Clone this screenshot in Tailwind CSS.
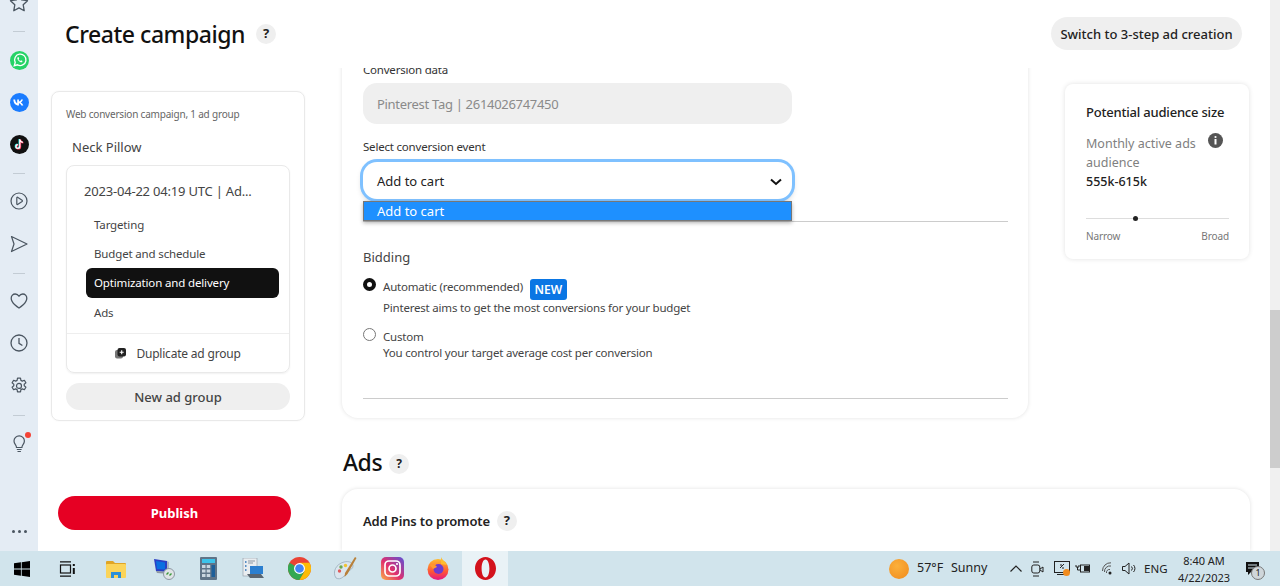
<!doctype html>
<html>
<head>
<meta charset="utf-8">
<title>Create campaign</title>
<script src="https://cdn.jsdelivr.net/npm/@tailwindcss/browser@4"></script>
</head>
<body class="font-['Noto_Sans',sans-serif] text-[#333] bg-white overflow-hidden">
<div class="w-[1280px] h-[586px] flex flex-col overflow-hidden">
  <div class="flex h-[551px]">
    <!-- browser sidebar -->
    <aside class="w-[38px] shrink-0 bg-[#e4ecf4] flex flex-col items-center overflow-hidden text-[#4a5560]">
      <svg class="w-[20px] h-[20px] mt-[-7px] shrink-0" viewBox="0 0 20 20" fill="none" stroke="currentColor" stroke-width="1.3"><path d="M10 1.5l2.6 5.4 5.9.8-4.3 4.1 1 5.9-5.2-2.8-5.2 2.8 1-5.9L1.500 7.700l5.900-.8z" stroke-linejoin="round"/></svg>
      <div class="w-[12px] h-px bg-[#c3ccd4] mt-[18px]"></div>
      <svg class="w-[19px] h-[19px] mt-[19px] shrink-0" viewBox="0 0 20 20"><circle cx="10" cy="10" r="10" fill="#25d366"/><path d="M4.500 15.500l1-3.500a6 6 0 1 1 2.400 2.500z" fill="none" stroke="#fff" stroke-width="1.400"/><path d="M7.800 6.800c-.8 1.800 2.800 6 5 5l.3-1.300-1.500-.8-.7.800c-.8-.3-1.500-1-1.900-1.900l.7-.7-.7-1.500z" fill="#fff"/></svg>
      <svg class="w-[19px] h-[19px] mt-[23px] shrink-0" viewBox="0 0 20 20"><circle cx="10" cy="10" r="10" fill="#1a7cff"/><path d="M3.500 6.800h1.900c.2 2.400 1.200 3.600 2.200 3.900V6.800h1.800v2.200c1-.1 2-1.100 2.400-2.200h1.800c-.3 1.500-1.400 2.600-2.200 3.100.8.400 2.100 1.400 2.600 3.200h-2c-.4-1.200-1.400-2.100-2.600-2.300v2.300h-.2c-3.500 0-5.500-2.400-5.700-6.300z" fill="#fff"/></svg>
      <svg class="w-[19px] h-[19px] mt-[23px] shrink-0" viewBox="0 0 20 20"><circle cx="10" cy="10" r="10" fill="#111"/><path d="M10.300 4.500v7.600a2 2 0 1 1-2-2M10.300 4.500c.2 1.900 1.400 3 3.200 3.200" fill="none" stroke="#25f4ee" stroke-width="1.700" transform="translate(-.5 -.3)"/><path d="M10.300 4.500v7.600a2 2 0 1 1-2-2M10.300 4.500c.2 1.900 1.400 3 3.200 3.200" fill="none" stroke="#fe2c55" stroke-width="1.700" transform="translate(.6 .4)"/><path d="M10.300 4.500v7.600a2 2 0 1 1-2-2M10.300 4.500c.2 1.900 1.400 3 3.200 3.200" fill="none" stroke="#fff" stroke-width="1.300"/></svg>
      <div class="w-[12px] h-px bg-[#c3ccd4] mt-[19px]"></div>
      <svg class="w-[18px] h-[18px] mt-[18px] shrink-0" viewBox="0 0 18 18" fill="none" stroke="currentColor" stroke-width="1.200"><circle cx="9" cy="9" r="8"/><path d="M6.800 5.800c0-.5.400-.7.800-.5l4.500 3c.4.300.4.900 0 1.200l-4.500 3c-.4.200-.8 0-.8-.5z" stroke-linejoin="round"/></svg>
      <svg class="w-[18px] h-[18px] mt-[25px] shrink-0" viewBox="0 0 18 18" fill="none" stroke="currentColor" stroke-width="1.200"><path d="M1.500 1.500L17 9 1.500 16.500 4 9z" stroke-linejoin="round"/></svg>
      <div class="w-[12px] h-px bg-[#c3ccd4] mt-[20px]"></div>
      <svg class="w-[18px] h-[18px] mt-[18px] shrink-0" viewBox="0 0 18 18" fill="none" stroke="currentColor" stroke-width="1.300"><path d="M9 16S1.200 11.400 1.200 6.200C1.200 3.600 3.100 2 5.200 2 6.800 2 8.200 2.900 9 4.300 9.800 2.900 11.200 2 12.800 2c2.100 0 4 1.600 4 4.200C16.800 11.400 9 16 9 16z" stroke-linejoin="round"/></svg>
      <svg class="w-[18px] h-[18px] mt-[24px] shrink-0" viewBox="0 0 18 18" fill="none" stroke="currentColor" stroke-width="1.300"><circle cx="9" cy="9" r="8"/><path d="M9 4v5.300l3.400 2.200"/></svg>
      <svg class="w-[18px] h-[18px] mt-[25px] shrink-0" viewBox="0 0 18 18" fill="none" stroke="currentColor" stroke-width="1.200"><path d="M7.500 1.200h3l.4 2.200 1.400.7 2.100-.8 1.500 2.600-1.700 1.400v1.400l1.700 1.400-1.500 2.600-2.100-.8-1.400.7-.4 2.200h-3l-.4-2.200-1.400-.7-2.100.8-1.500-2.600 1.700-1.400V7.300L2.100 5.900l1.500-2.600 2.100.8 1.400-.7z" stroke-linejoin="round"/><circle cx="9" cy="8.900" r="2.500"/></svg>
      <div class="w-[12px] h-px bg-[#c3ccd4] mt-[20px]"></div>
      <div class="relative mt-[18px] w-[18px] h-[20px] shrink-0">
        <svg class="w-[18px] h-[20px]" viewBox="0 0 18 20" fill="none" stroke="currentColor" stroke-width="1.200"><path d="M6.500 13.500c0-2.500-2.500-3.300-2.500-6.500a5.200 5.200 0 0 1 10.400 0c0 3.200-2.500 4-2.500 6.500zM6.800 15.500h4.800M7.500 17.500h3.400"/></svg>
        <span class="absolute top-[-2px] right-[-3px] w-[6px] h-[6px] rounded-full bg-[#f44336]"></span>
      </div>
      <div class="flex gap-[3px] mt-auto mb-[18px]">
        <span class="w-[3px] h-[3px] rounded-full bg-[#4a5560]"></span>
        <span class="w-[3px] h-[3px] rounded-full bg-[#4a5560]"></span>
        <span class="w-[3px] h-[3px] rounded-full bg-[#4a5560]"></span>
      </div>
    </aside>

    <!-- page -->
    <main class="w-[1232px] shrink-0 flex flex-col">
      <header class="h-[68px] shrink-0 flex items-start relative z-10 bg-white">
        <h1 class="ml-[27px] mt-[17px] text-[23px] tracking-[-0.45px] leading-[34px] font-medium text-[#111]">Create campaign</h1>
        <span class="ml-[11px] mt-[24px] w-[20px] h-[20px] rounded-full bg-[#efefef] flex items-center justify-center text-[13px] font-bold text-[#222]">?</span>
        <button class="ml-auto mr-[28px] mt-[17px] pt-[2px] h-[33px] w-[191px] rounded-full bg-[#efefef] text-[13px] font-medium text-[#222] whitespace-nowrap">Switch to 3-step ad creation</button>
      </header>

      <div class="flex flex-1 min-h-0 overflow-hidden">
        <!-- left column -->
        <div class="w-[254px] ml-[13px] shrink-0 flex flex-col">
          <div class="mt-[23px] h-[330px] border border-[#e9e9e9] rounded-lg px-[14px] shadow-[0_0_2px_rgba(0,0,0,0.05)]">
            <p class="mt-[15px] text-[10px] tracking-[-0.2px] leading-[14px] text-[#666] whitespace-nowrap">Web conversion campaign, 1 ad group</p>
            <p class="mt-[17px] ml-[6px] text-[13px] leading-[18px] text-[#444]">Neck Pillow</p>
            <div class="mt-[9px] h-[208px] border border-[#e9e9e9] rounded-lg flex flex-col shadow-[0_1px_2px_rgba(0,0,0,0.06)]">
              <p class="mt-[16px] ml-[17px] text-[13px] tracking-[-0.2px] leading-[18px] text-[#444] whitespace-nowrap">2023-04-22 04:19 UTC | Ad...</p>
              <ul class="mt-[10px] pl-[19px] pr-[10px] text-[11.500px] tracking-[-0.15px] text-[#444]">
                <li class="h-[29px] pl-[8px] flex items-center">Targeting</li>
                <li class="h-[29px] pl-[8px] flex items-center">Budget and schedule</li>
                <li class="h-[30px] pl-[8px] flex items-center bg-[#111] text-white rounded-md">Optimization and delivery</li>
                <li class="h-[30px] pl-[8px] flex items-center">Ads</li>
              </ul>
              <div class="mt-auto h-[39px] pt-[1px] border-t border-[#eee] flex items-center justify-center gap-[10px] text-[12px] tracking-[-0.2px] text-[#444]">
                <svg class="w-[11px] h-[11px]" viewBox="0 0 11 11"><rect x="0" y="2" width="8" height="8.500" rx="2" fill="#777"/><rect x="2.500" y="0" width="8.500" height="8.500" rx="2" fill="#222"/><path d="M6.700 2.300v4M4.700 4.300h4" stroke="#fff" stroke-width="1.100"/></svg>
                <span>Duplicate ad group</span>
              </div>
            </div>
            <button class="mt-[10px] pt-[2px] w-full h-[27px] rounded-full bg-[#efefef] text-[13px] text-[#444] font-medium">New ad group</button>
          </div>
          <button class="mt-auto mb-[21px] ml-[7px] pt-[1px] w-[233px] h-[34px] rounded-full bg-[#e60023] text-white text-[13px] font-bold">Publish</button>
        </div>

        <!-- center column -->
        <div class="w-[686px] ml-[37px] shrink-0 flex flex-col">
          <section class="mt-[-10px] h-[360px] shrink-0 bg-white rounded-b-2xl shadow-[0_0_4px_rgba(0,0,0,0.12)] px-[21px]">
            <p class="text-[11.500px] tracking-[-0.2px] leading-[16px] text-[#333] pt-[4px] h-[25px]">Conversion data</p>
            <div class="w-[429px] h-[41px] pt-[2px] rounded-[14px] bg-[#efefef] flex items-center px-[14px] text-[13px] tracking-[-0.3px] text-[#8a8a8a]">Pinterest Tag | 2614026747450</div>
            <p class="mt-[15px] text-[11.500px] tracking-[-0.2px] leading-[16px] text-[#333]">Select conversion event</p>
            <div class="relative mt-[7px] w-[429px]">
              <div class="h-[37px] pt-[3px] rounded-[14px] bg-white ring-[3px] ring-[#7fc1ff] shadow-[0_3px_6px_rgba(0,0,0,0.25)] flex items-center justify-between pl-[14px] pr-[10px] text-[13px] text-[#222]">
                <span>Add to cart</span>
                <svg class="w-[12px] h-[8px]" viewBox="0 0 12 8" fill="none" stroke="#111" stroke-width="2"><path d="M1 1.500l5 4.500 5-4.500"/></svg>
              </div>
              <div class="absolute z-10 top-[39px] left-0 w-full h-[20px] bg-[#1e90ff] border border-[#777] text-white text-[13px] leading-[18px] pl-[13px] shadow-[0_2px_4px_rgba(0,0,0,0.3)]">Add to cart</div>
            </div>
            <div class="mt-[22px] w-[645px] border-t border-[#ccc]"></div>
            <p class="mt-[26px] text-[13px] leading-[18px] text-[#444]">Bidding</p>
            <div class="mt-[10px] flex gap-[7px]">
              <span class="mt-[2px] w-[13px] h-[13px] rounded-full bg-white border-[4px] border-[#111] shrink-0"></span>
              <div class="mt-[3px] text-[11.500px] tracking-[-0.2px] leading-[16px] text-[#444]">
                <div class="flex items-start gap-[7px]"><span>Automatic (recommended)</span><span class="mb-[-5px] w-[37px] h-[21px] rounded-[3px] bg-[#0a76e4] text-white text-[12px] tracking-normal font-semibold flex items-center justify-center pt-[1px]">NEW</span></div>
                <p class="mt-[5px]">Pinterest aims to get the most conversions for your budget</p>
              </div>
            </div>
            <div class="mt-[10px] flex gap-[7px]">
              <span class="mt-[2px] w-[13px] h-[13px] rounded-full bg-white border border-[#777] shrink-0"></span>
              <div class="mt-[3px] text-[11.500px] tracking-[-0.2px] leading-[15px] text-[#444]">
                <p class="leading-[16px]">Custom</p>
                <p>You control your target average cost per conversion</p>
              </div>
            </div>
            <div class="mt-[38px] w-[645px] border-t border-[#ccc]"></div>
          </section>
          <div class="mt-[27px] flex items-center h-[34px] shrink-0">
            <h2 class="ml-[1px] pt-[1px] text-[23px] tracking-[-0.45px] font-medium text-[#111]">Ads</h2>
            <span class="ml-[7px] mt-[4px] w-[20px] h-[20px] rounded-full bg-[#efefef] flex items-center justify-center text-[12px] font-bold text-[#222]">?</span>
          </div>
          <section class="mt-[10px] w-[908px] flex-1 rounded-t-2xl bg-white shadow-[0_0_4px_rgba(0,0,0,0.12)] px-[21px] pt-[23px] shrink-0">
            <div class="flex items-center gap-[7px]">
              <h3 class="text-[13px] tracking-[-0.15px] font-semibold text-[#222]">Add Pins to promote</h3>
              <span class="w-[20px] h-[20px] mt-[-2px] rounded-full bg-[#efefef] flex items-center justify-center text-[13px] font-bold text-[#222]">?</span>
            </div>
          </section>
        </div>

        <!-- right column -->
        <div class="w-[184px] ml-[37px] shrink-0">
          <div class="mt-[16px] h-[175px] rounded-lg bg-white shadow-[0_0_5px_rgba(0,0,0,0.12)] pl-[21px] pr-[20px] pt-[19px]">
            <p class="text-[13px] tracking-[-0.2px] leading-[18px] font-medium text-[#222] whitespace-nowrap">Potential audience size</p>
            <div class="mt-[13px] flex justify-between items-start">
              <p class="text-[12.500px] leading-[19px] text-[#808080] w-[118px]">Monthly active ads audience</p>
              <svg class="w-[15px] h-[15px] mt-[-1px] mr-[6px]" viewBox="0 0 15 15"><circle cx="7.500" cy="7.500" r="7.500" fill="#555"/><circle cx="7.500" cy="4" r="1.100" fill="#fff"/><rect x="6.500" y="6" width="2" height="5.500" fill="#fff"/></svg>
            </div>
            <p class="text-[12.500px] leading-[19px] font-medium text-[#222]">555k-615k</p>
            <div class="relative mt-[27px] h-px bg-[#ddd] w-[143px]">
              <span class="absolute left-[47px] top-[-2px] w-[5px] h-[5px] rounded-full bg-[#222]"></span>
            </div>
            <div class="mt-[10px] w-[143px] flex justify-between text-[10px] tracking-[-0.1px] leading-[14px] text-[#777]"><span>Narrow</span><span>Broad</span></div>
          </div>
        </div>
      </div>
    </main>

    <!-- scrollbar -->
    <div class="w-[10px] shrink-0 bg-[#f0f0f0] pt-[310px]"><div class="h-[158px] bg-[#cdcdcd]"></div></div>
  </div>

  <!-- windows taskbar -->
  <footer class="h-[35px] shrink-0 bg-[#d1e4ec] flex items-center text-[#222]">
    <svg class="ml-[14px] w-[16px] h-[16px] shrink-0" viewBox="0 0 16 16" fill="#000"><path d="M0 2.300l6.900-1v6.300H0zM7.700 1.200L16 0v7.600H7.700zM0 8.400h6.900v6.300l-6.900-1zM7.700 8.400H16V16l-8.300-1.200z"/></svg>
    <svg class="ml-[29px] w-[16px] h-[16px] shrink-0" viewBox="0 0 16 16" fill="none" stroke="#111" stroke-width="1.200"><path d="M1 .8h11M1 15.200h11"/><rect x="1.500" y="4" width="10" height="8"/><rect x="13.800" y="3" width="2" height="2" fill="#111" stroke="none"/><rect x="13.800" y="7" width="2" height="6" fill="#111" stroke="none"/></svg>
    <svg class="ml-[31px] w-[20px] h-[18px] shrink-0" viewBox="0 0 20 18"><path d="M0 2a1 1 0 0 1 1-1h6l2 2h10a1 1 0 0 1 1 1v2H0z" fill="#e0a526"/><rect x="0" y="4" width="20" height="14" rx="1" fill="#fbd45a"/><path d="M5 18v-6h10v6h-3v-3H8v3z" fill="#2b8fd8"/></svg>
    <svg class="ml-[27px] w-[22px] h-[22px] shrink-0" viewBox="0 0 22 22"><path d="M1 1l13 2v11L3 13z" fill="#2b3fc4"/><path d="M3 3l9 1.500v7L4 11z" fill="#0b6fe0"/><path d="M14 3l2 1v11l-2-1z" fill="#aab4c0"/><path d="M3 13l11 1 2 1v1l-12-1z" fill="#8d97a3"/><circle cx="16" cy="16" r="5.500" fill="#dfe3e6" stroke="#8d97a3"/><path d="M13.500 16.500l2-2M16.500 17.500l2-2" stroke="#3a9a3a" stroke-width="1.400"/></svg>
    <svg class="ml-[25px] w-[17px] h-[23px] shrink-0" viewBox="0 0 17 23"><rect width="17" height="23" rx="1" fill="#5f7488"/><rect x="2" y="2" width="13" height="4" fill="#3dc3ea"/><g fill="#c9d6e0"><rect x="2" y="8" width="3.500" height="3"/><rect x="6.700" y="8" width="3.500" height="3"/><rect x="2" y="12.500" width="3.500" height="3"/><rect x="6.700" y="12.500" width="3.500" height="3"/><rect x="2" y="17" width="3.500" height="3"/><rect x="6.700" y="17" width="3.500" height="3"/></g><rect x="11.500" y="8" width="3.500" height="12" fill="#1d5f99"/></svg>
    <svg class="ml-[25px] w-[22px] h-[22px] shrink-0" viewBox="0 0 22 22"><rect x="1" y="0" width="14" height="18" fill="#e9edf0" stroke="#8d97a3" stroke-width=".6"/><path d="M3 4h1.500M3 8h1.500M3 12h1.500" stroke="#2a6fb5" stroke-width="1.500"/><path d="M6 3h7M6 5h5" stroke="#8d97a3"/><path d="M8 8h13v8H8z" fill="#2b7fd0"/><path d="M5 16h14l3 4H8z" fill="#5a6570"/></svg>
    <svg class="ml-[24px] w-[23px] h-[23px] shrink-0" viewBox="0 0 24 24"><circle cx="12" cy="12" r="12" fill="#ea4335"/><path d="M12 12L1.600 6A12 12 0 0 0 12 24l5.200-9z" fill="#34a853"/><path d="M12 6h10.400A12 12 0 0 1 12 24l5.200-9z" fill="#fbbc05"/><circle cx="12" cy="12" r="5.700" fill="#fff"/><circle cx="12" cy="12" r="4.500" fill="#4285f4"/></svg>
    <svg class="ml-[23px] w-[23px] h-[24px] shrink-0" viewBox="0 0 23 24"><path d="M2 21C-2 15 2 7 10 5c5-1.200 9 .5 9 4 0 2.500-2.500 3.500-4.500 5.500C11 18 7 24 2 21z" fill="#dbe6ee" stroke="#8fa3b3" stroke-width=".7"/><circle cx="5.500" cy="14" r="1.700" fill="#e05a5a"/><circle cx="7" cy="10" r="1.700" fill="#6aa84f"/><circle cx="11.500" cy="8.500" r="1.700" fill="#f1c232"/><path d="M21 0l1.500 1-9 16-3 3 .5-4z" fill="#b8803a"/></svg>
    <svg class="ml-[24px] w-[23px] h-[23px] shrink-0" viewBox="0 0 23 23"><defs><linearGradient id="ig" x1="0" y1="1" x2="1" y2="0"><stop offset="0" stop-color="#fcb045"/><stop offset=".45" stop-color="#e1306c"/><stop offset="1" stop-color="#5b51d8"/></linearGradient></defs><rect width="23" height="23" rx="5" fill="url(#ig)"/><rect x="4" y="4" width="15" height="15" rx="4" fill="none" stroke="#fff" stroke-width="1.700"/><circle cx="11.500" cy="11.500" r="3.500" fill="none" stroke="#fff" stroke-width="1.700"/><circle cx="16" cy="7" r="1.100" fill="#fff"/></svg>
    <svg class="ml-[23px] w-[22px] h-[23px] shrink-0" viewBox="0 0 22 23"><defs><linearGradient id="ff" x1="0" y1="0" x2="0" y2="1"><stop offset="0" stop-color="#ffbd2e"/><stop offset=".6" stop-color="#ff5634"/><stop offset="1" stop-color="#e31587"/></linearGradient></defs><circle cx="11" cy="12.500" r="10.500" fill="url(#ff)"/><path d="M14 0c1 3 4 4 6 8l-6-1z" fill="#ffbd2e"/><circle cx="11.500" cy="12" r="5" fill="#6e3bd0"/><path d="M3 8c3-1 6 0 7 2l-4 2z" fill="#ff9a2e"/></svg>
    <div class="ml-[13px] w-[46px] h-full bg-[#e9f2f6] flex items-center justify-center shrink-0">
      <svg class="w-[21px] h-[23px]" viewBox="0 0 21 23"><path fill-rule="evenodd" d="M10.500 0C16.300 0 21 5.100 21 11.500S16.300 23 10.500 23 0 17.900 0 11.500 4.700 0 10.500 0zm0 2.500c-2.400 0-3.900 4-3.900 9s1.500 9 3.900 9 3.900-4 3.900-9-1.500-9-3.900-9z" fill="#d3121c"/></svg>
    </div>
    <div class="ml-auto flex items-center text-[12.500px] shrink-0">
      <span class="w-[20px] h-[20px] rounded-full bg-[radial-gradient(circle_at_40%_35%,#fbb03b,#f08a1d)]"></span>
      <span class="ml-[8px] w-[34px] whitespace-nowrap">57°F</span>
      <span class="ml-0 w-[53px]">Sunny</span>
      <svg class="ml-[6px] w-[12px] h-[7px]" viewBox="0 0 12 7" fill="none" stroke="#222" stroke-width="1.200"><path d="M.5 6.500L6 1l5.500 5.500"/></svg>
      <svg class="ml-[9px] w-[13px] h-[16px]" viewBox="0 0 13 16" fill="none" stroke="#222"><path d="M2 1h6M2 15h6"/><rect x=".8" y="4" width="8" height="8" rx="2"/><path d="M9 8l3-2v5l-3-2"/></svg>
      <svg class="ml-[10px] w-[17px] h-[17px]" viewBox="0 0 17 17" fill="none" stroke="#222"><rect x=".5" y="1.500" width="15" height="11"/><path d="M3 14.500h10M6 8l4-4M6 5h2M8 8h2"/><circle cx="12.500" cy="12.500" r="3.500" fill="#f28c1e" stroke="none"/></svg>
      <svg class="ml-[4px] w-[15px] h-[11px]" viewBox="0 0 15 11"><path d="M1 2v2h3V2M2.500 4v3h3" fill="none" stroke="#222"/><rect x="5.500" y="2" width="9" height="7" fill="none" stroke="#222"/><rect x="9" y="3" width="5" height="5" fill="#222"/></svg>
      <svg class="ml-[12px] w-[13px] h-[13px]" viewBox="0 0 13 13" fill="none" stroke="#555"><path d="M.5 9A8 8 0 0 1 9 .8M2.500 10A5.500 5.500 0 0 1 9 4M4.500 11A3 3 0 0 1 8 7.500"/><circle cx="8" cy="11" r="1.500" fill="#222" stroke="none"/></svg>
      <svg class="ml-[7px] w-[15px] h-[13px]" viewBox="0 0 15 13" fill="none" stroke="#222"><path d="M.5 4.500h2.500L7 1v11L3 8.500H.5zM9.500 4.500a3 3 0 0 1 0 4M11.500 3a5 5 0 0 1 0 7"/></svg>
      <span class="ml-[7px] w-[26px] text-[11.500px]">ENG</span>
      <div class="ml-[4px] w-[60px] text-center text-[11px] leading-[17px]"><p>8:40 AM</p><p>4/22/2023</p></div>
      <div class="relative ml-[12px] mr-[21px] w-[13px] h-[14px]">
        <svg class="w-[13px] h-[14px]" viewBox="0 0 13 14"><path d="M0 0h13v10H5l-3 3v-3H0z" fill="#111"/><path d="M2 3h9M2 6h9" stroke="#d1e4ec"/></svg>
        <span class="absolute left-[5px] top-[4px] w-[14px] h-[14px] rounded-full bg-[#cfd6da] border border-[#777] text-[9px] leading-[12px] text-center">1</span>
      </div>
    </div>
  </footer>
</div>
</body>
</html>
